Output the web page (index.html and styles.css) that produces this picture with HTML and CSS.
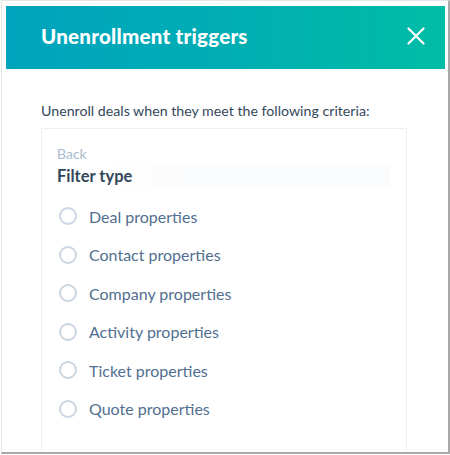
FILE: index.html
```html
<!DOCTYPE html>
<html>
<head>
<meta charset="utf-8">
<link rel="stylesheet" href="styles.css">
</head>
<body>
<div class="frame">
  <div class="header">
    <h1 class="title">Unenrollment triggers</h1>
    <svg class="close" width="18" height="18" viewBox="0 0 18 18"><path d="M1.5 1.5 L16.5 16.5 M16.5 1.5 L1.5 16.5" stroke="#fff" stroke-width="2.2" stroke-linecap="round"/></svg>
  </div>
  <div class="content">
    <p class="desc">Unenroll deals when they meet the following criteria:</p>
    <div class="panel">
      <div class="panel-head">
        <div class="back">Back</div>
        <div class="ftype">Filter type</div>
      </div>
      <ul class="options">
        <li class="option"><span class="radio"></span>Deal properties</li>
        <li class="option"><span class="radio"></span>Contact properties</li>
        <li class="option"><span class="radio"></span>Company properties</li>
        <li class="option"><span class="radio"></span>Activity properties</li>
        <li class="option"><span class="radio"></span>Ticket properties</li>
        <li class="option"><span class="radio"></span>Quote properties</li>
      </ul>
    </div>
  </div>
</div>
</body>
</html>
```
FILE: styles.css
```css
* { box-sizing: border-box; }
html, body { margin: 0; padding: 0; background: #fff; }
body { font-family: Lato, "Open Sans", sans-serif; color: #33475b; }
.frame {
  width: 449px;
  height: 454px;
  margin: 0 0 0 1px;
  border-top: 1px solid #e6e6e6;
  border-left: 1px solid #e3e3e3;
  border-right: 2px solid #a9a9a9;
  border-bottom: 2px solid #a9a9a9;
  padding: 5px 3px 0 4px;
  overflow: hidden;
}
.header {
  height: 63px;
  background: linear-gradient(90deg, #00a3bd 0%, #00afb2 55%, #00bda5 100%);
  display: flex;
  align-items: center;
  justify-content: space-between;
  padding: 0 20px 4px 35px;
}
.title {
  margin: 0;
  color: #fff;
  font-size: 20.5px;
  font-weight: 900;
  letter-spacing: 0.25px;
}
.close { display: block; }
.content { padding: 32px 0 0 35px; }
.desc {
  margin: 0;
  font-size: 14.2px;
  line-height: 20px;
  color: #33475b;
}
.panel {
  margin-top: 7px;
  width: 366px;
  height: 340px;
  border: 1px solid #eaf0f6;
  border-bottom: none;
  padding: 16px 16px 0 15px;
}
.back {
  font-size: 14px;
  line-height: 18px;
  color: #a8bbcf;
}
.ftype {
  margin-top: 3px;
  font-size: 16.5px;
  font-weight: 700;
  line-height: 20px;
  color: #33475b;
  background: linear-gradient(90deg, #fff 0%, #fbfcfd 40%);
}
.options {
  list-style: none;
  margin: 11px 0 0 0;
  padding: 0;
}
.option {
  display: flex;
  align-items: center;
  height: 38.5px;
  font-size: 16px;
  color: #516f90;
  padding-left: 2px;
}
.radio {
  width: 18px;
  height: 18px;
  border: 2px solid #cbd6e2;
  border-radius: 50%;
  margin-right: 12px;
  flex: none;
}
```
